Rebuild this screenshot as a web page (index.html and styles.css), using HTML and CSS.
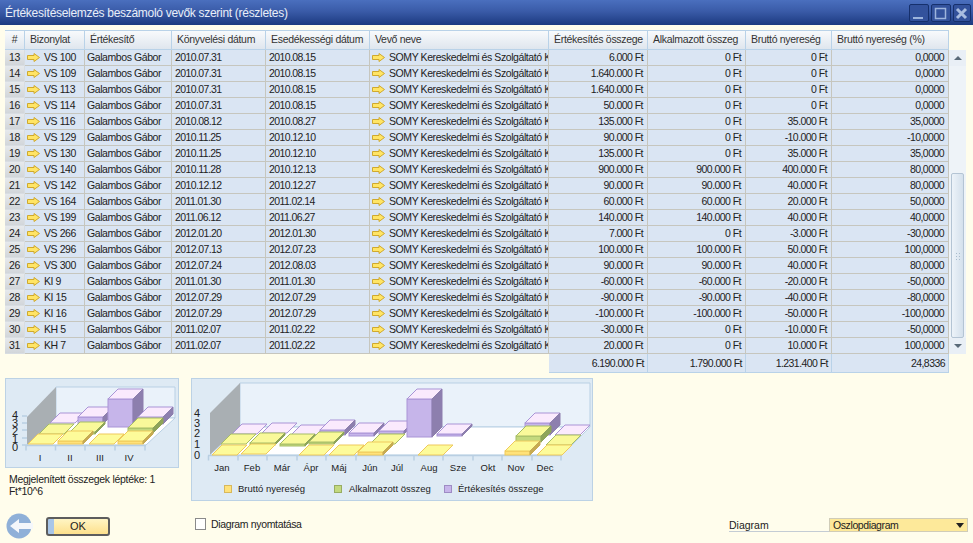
FILE: index.html
```html
<!DOCTYPE html>
<html lang="hu">

<head>
    <meta charset="utf-8">
    <title>Értékesítéselemzés</title>
    <link rel="stylesheet" href="styles.css">
</head>

<body>
    <svg class="defs" width="0" height="0">
        <defs>
            <symbol id="arrow" viewBox="0 0 13 9">
                <polygon points="0.5,2.5 7,2.5 7,0.5 12.5,4.5 7,8.5 7,6.5 0.5,6.5" fill="#ffe566" stroke="#cfa92f" />
            </symbol>
            <polygon id="top" points="0,0 25,0 35,-10 10,-10" />
        </defs>
    </svg>

    <div class="titlebar">
        <span class="title">Értékesítéselemzés beszámoló vevők szerint (részletes)</span>
        <div class="winbtns">
            <span class="winbtn"><svg width="18" height="18"><rect x="3" y="12" width="10" height="2" fill="#9db4dc" /></svg></span>
            <span class="winbtn"><svg width="18" height="18"><rect x="3.5" y="3.5" width="10" height="10" fill="none" stroke="#9db4dc" stroke-width="1.5" /></svg></span>
            <span class="winbtn"><svg width="16" height="18"><path d="M3 4l9 9M12 4l-9 9" stroke="#a9bde0" stroke-width="3" /></svg></span>
        </div>
    </div>

    <div class="gridwrap">
        <table class="grid">
            <colgroup>
                <col class="c1"><col class="c2"><col class="c3"><col class="c4"><col class="c5">
                <col class="c6"><col class="c7"><col class="c8"><col class="c9"><col class="c10">
            </colgroup>
            <thead>
                <tr>
                    <th class="center">#</th>
                    <th>Bizonylat</th>
                    <th>Értékesítő</th>
                    <th>Könyvelési dátum</th>
                    <th>Esedékességi dátum</th>
                    <th>Vevő neve</th>
                    <th>Értékesítés összege</th>
                    <th>Alkalmazott összeg</th>
                    <th>Bruttó nyereség</th>
                    <th>Bruttó nyereség (%)</th>
                </tr>
            </thead>
            <tbody>
                <tr><td class="num">13</td><td class="doc"><svg><use href="#arrow" /></svg>VS 100</td><td>Galambos Gábor</td><td class="d">2010.07.31</td><td class="d">2010.08.15</td><td class="doc"><svg><use href="#arrow" /></svg>SOMY Kereskedelmi és Szolgáltató Kft.</td><td class="r">6.000 Ft</td><td class="r">0 Ft</td><td class="r">0 Ft</td><td class="r">0,0000</td></tr>
                <tr><td class="num">14</td><td class="doc"><svg><use href="#arrow" /></svg>VS 109</td><td>Galambos Gábor</td><td class="d">2010.07.31</td><td class="d">2010.08.15</td><td class="doc"><svg><use href="#arrow" /></svg>SOMY Kereskedelmi és Szolgáltató Kft.</td><td class="r">1.640.000 Ft</td><td class="r">0 Ft</td><td class="r">0 Ft</td><td class="r">0,0000</td></tr>
                <tr><td class="num">15</td><td class="doc"><svg><use href="#arrow" /></svg>VS 113</td><td>Galambos Gábor</td><td class="d">2010.07.31</td><td class="d">2010.08.15</td><td class="doc"><svg><use href="#arrow" /></svg>SOMY Kereskedelmi és Szolgáltató Kft.</td><td class="r">1.640.000 Ft</td><td class="r">0 Ft</td><td class="r">0 Ft</td><td class="r">0,0000</td></tr>
                <tr><td class="num">16</td><td class="doc"><svg><use href="#arrow" /></svg>VS 114</td><td>Galambos Gábor</td><td class="d">2010.07.31</td><td class="d">2010.08.15</td><td class="doc"><svg><use href="#arrow" /></svg>SOMY Kereskedelmi és Szolgáltató Kft.</td><td class="r">50.000 Ft</td><td class="r">0 Ft</td><td class="r">0 Ft</td><td class="r">0,0000</td></tr>
                <tr><td class="num">17</td><td class="doc"><svg><use href="#arrow" /></svg>VS 116</td><td>Galambos Gábor</td><td class="d">2010.08.12</td><td class="d">2010.08.27</td><td class="doc"><svg><use href="#arrow" /></svg>SOMY Kereskedelmi és Szolgáltató Kft.</td><td class="r">135.000 Ft</td><td class="r">0 Ft</td><td class="r">35.000 Ft</td><td class="r">35,0000</td></tr>
                <tr><td class="num">18</td><td class="doc"><svg><use href="#arrow" /></svg>VS 129</td><td>Galambos Gábor</td><td class="d">2010.11.25</td><td class="d">2010.12.10</td><td class="doc"><svg><use href="#arrow" /></svg>SOMY Kereskedelmi és Szolgáltató Kft.</td><td class="r">90.000 Ft</td><td class="r">0 Ft</td><td class="r">-10.000 Ft</td><td class="r">-10,0000</td></tr>
                <tr><td class="num">19</td><td class="doc"><svg><use href="#arrow" /></svg>VS 130</td><td>Galambos Gábor</td><td class="d">2010.11.25</td><td class="d">2010.12.10</td><td class="doc"><svg><use href="#arrow" /></svg>SOMY Kereskedelmi és Szolgáltató Kft.</td><td class="r">135.000 Ft</td><td class="r">0 Ft</td><td class="r">35.000 Ft</td><td class="r">35,0000</td></tr>
                <tr><td class="num">20</td><td class="doc"><svg><use href="#arrow" /></svg>VS 140</td><td>Galambos Gábor</td><td class="d">2010.11.28</td><td class="d">2010.12.13</td><td class="doc"><svg><use href="#arrow" /></svg>SOMY Kereskedelmi és Szolgáltató Kft.</td><td class="r">900.000 Ft</td><td class="r">900.000 Ft</td><td class="r">400.000 Ft</td><td class="r">80,0000</td></tr>
                <tr><td class="num">21</td><td class="doc"><svg><use href="#arrow" /></svg>VS 142</td><td>Galambos Gábor</td><td class="d">2010.12.12</td><td class="d">2010.12.27</td><td class="doc"><svg><use href="#arrow" /></svg>SOMY Kereskedelmi és Szolgáltató Kft.</td><td class="r">90.000 Ft</td><td class="r">90.000 Ft</td><td class="r">40.000 Ft</td><td class="r">80,0000</td></tr>
                <tr><td class="num">22</td><td class="doc"><svg><use href="#arrow" /></svg>VS 164</td><td>Galambos Gábor</td><td class="d">2011.01.30</td><td class="d">2011.02.14</td><td class="doc"><svg><use href="#arrow" /></svg>SOMY Kereskedelmi és Szolgáltató Kft.</td><td class="r">60.000 Ft</td><td class="r">60.000 Ft</td><td class="r">20.000 Ft</td><td class="r">50,0000</td></tr>
                <tr><td class="num">23</td><td class="doc"><svg><use href="#arrow" /></svg>VS 199</td><td>Galambos Gábor</td><td class="d">2011.06.12</td><td class="d">2011.06.27</td><td class="doc"><svg><use href="#arrow" /></svg>SOMY Kereskedelmi és Szolgáltató Kft.</td><td class="r">140.000 Ft</td><td class="r">140.000 Ft</td><td class="r">40.000 Ft</td><td class="r">40,0000</td></tr>
                <tr><td class="num">24</td><td class="doc"><svg><use href="#arrow" /></svg>VS 266</td><td>Galambos Gábor</td><td class="d">2012.01.20</td><td class="d">2012.01.30</td><td class="doc"><svg><use href="#arrow" /></svg>SOMY Kereskedelmi és Szolgáltató Kft.</td><td class="r">7.000 Ft</td><td class="r">0 Ft</td><td class="r">-3.000 Ft</td><td class="r">-30,0000</td></tr>
                <tr><td class="num">25</td><td class="doc"><svg><use href="#arrow" /></svg>VS 296</td><td>Galambos Gábor</td><td class="d">2012.07.13</td><td class="d">2012.07.23</td><td class="doc"><svg><use href="#arrow" /></svg>SOMY Kereskedelmi és Szolgáltató Kft.</td><td class="r">100.000 Ft</td><td class="r">100.000 Ft</td><td class="r">50.000 Ft</td><td class="r">100,0000</td></tr>
                <tr><td class="num">26</td><td class="doc"><svg><use href="#arrow" /></svg>VS 300</td><td>Galambos Gábor</td><td class="d">2012.07.24</td><td class="d">2012.08.03</td><td class="doc"><svg><use href="#arrow" /></svg>SOMY Kereskedelmi és Szolgáltató Kft.</td><td class="r">90.000 Ft</td><td class="r">90.000 Ft</td><td class="r">40.000 Ft</td><td class="r">80,0000</td></tr>
                <tr><td class="num">27</td><td class="doc"><svg><use href="#arrow" /></svg>KI 9</td><td>Galambos Gábor</td><td class="d">2011.01.30</td><td class="d">2011.01.30</td><td class="doc"><svg><use href="#arrow" /></svg>SOMY Kereskedelmi és Szolgáltató Kft.</td><td class="r">-60.000 Ft</td><td class="r">-60.000 Ft</td><td class="r">-20.000 Ft</td><td class="r">-50,0000</td></tr>
                <tr><td class="num">28</td><td class="doc"><svg><use href="#arrow" /></svg>KI 15</td><td>Galambos Gábor</td><td class="d">2012.07.29</td><td class="d">2012.07.29</td><td class="doc"><svg><use href="#arrow" /></svg>SOMY Kereskedelmi és Szolgáltató Kft.</td><td class="r">-90.000 Ft</td><td class="r">-90.000 Ft</td><td class="r">-40.000 Ft</td><td class="r">-80,0000</td></tr>
                <tr><td class="num">29</td><td class="doc"><svg><use href="#arrow" /></svg>KI 16</td><td>Galambos Gábor</td><td class="d">2012.07.29</td><td class="d">2012.07.29</td><td class="doc"><svg><use href="#arrow" /></svg>SOMY Kereskedelmi és Szolgáltató Kft.</td><td class="r">-100.000 Ft</td><td class="r">-100.000 Ft</td><td class="r">-50.000 Ft</td><td class="r">-100,0000</td></tr>
                <tr><td class="num">30</td><td class="doc"><svg><use href="#arrow" /></svg>KH 5</td><td>Galambos Gábor</td><td class="d">2011.02.07</td><td class="d">2011.02.22</td><td class="doc"><svg><use href="#arrow" /></svg>SOMY Kereskedelmi és Szolgáltató Kft.</td><td class="r">-30.000 Ft</td><td class="r">0 Ft</td><td class="r">-10.000 Ft</td><td class="r">-50,0000</td></tr>
                <tr><td class="num">31</td><td class="doc"><svg><use href="#arrow" /></svg>KH 7</td><td>Galambos Gábor</td><td class="d">2011.02.07</td><td class="d">2011.02.22</td><td class="doc"><svg><use href="#arrow" /></svg>SOMY Kereskedelmi és Szolgáltató Kft.</td><td class="r">20.000 Ft</td><td class="r">0 Ft</td><td class="r">10.000 Ft</td><td class="r">100,0000</td></tr>
            </tbody>
            <tfoot>
                <tr>
                    <td colspan="6" class="blank"></td>
                    <td class="r">6.190.000 Ft</td>
                    <td class="r">1.790.000 Ft</td>
                    <td class="r">1.231.400 Ft</td>
                    <td class="r">24,8336</td>
                </tr>
            </tfoot>
        </table>

        <div class="scrollbar">
            <div class="scrollbtn"><span class="tri up"></span></div>
            <div class="scrolltrack">
                <div class="thumb"><span class="grip"></span></div>
            </div>
            <div class="scrollbtn"><span class="tri down"></span></div>
        </div>
    </div>

    <div class="charts">
        <div class="leftcol">
            <div class="panel small">
                <svg class="chart" width="174" height="90" viewBox="5 378 174 90">
                    <polygon class="wall" points="56,387 175,387 175,418 56,418" />
                    <polygon class="side-wall" points="27,417 56,387 56,418 27,445" />
                    <polygon class="floor" points="27,445 56,418 175,418 146,445" />
                    <path class="axis" d="M26 445.5H146M26 445.5v5M55.5 445.5v5M85 445.5v5M115 445.5v5M145 445.5v5M22 416H27M22 423H27M22 430H27M22 438H27M22 445H27" />

                    <g class="purple">
                        <use href="#top" x="50" y="423" />
                        <g transform="translate(78 417)"><rect width="25" height="7" /><use href="#top" /><polygon class="side" points="25,0 35,-10 35,-3 25,7" /></g>
                        <g transform="translate(108 399)"><rect width="25" height="28" /><use href="#top" /><polygon class="side" points="25,0 35,-10 35,18 25,28" /></g>
                        <g transform="translate(138 417)"><rect width="25" height="7" /><use href="#top" /><polygon class="side" points="25,0 35,-10 35,-3 25,7" /></g>
                    </g>
                    <g class="green">
                        <use href="#top" x="39" y="434" />
                        <g transform="translate(70 432)"><rect width="25" height="2" /><use href="#top" /><polygon class="side" points="25,0 35,-10 35,-8 25,2" /></g>
                        <g transform="translate(128 428)"><rect width="25" height="5" /><use href="#top" /><polygon class="side" points="25,0 35,-10 35,-5 25,5" /></g>
                    </g>
                    <g class="yellow">
                        <use href="#top" x="28" y="444" />
                        <g transform="translate(58 441)"><rect width="25" height="3" /><use href="#top" /><polygon class="side" points="25,0 35,-10 35,-7 25,3" /></g>
                        <use href="#top" x="89" y="444" />
                        <g transform="translate(118 441)"><rect width="25" height="3" /><use href="#top" /><polygon class="side" points="25,0 35,-10 35,-7 25,3" /></g>
                    </g>

                    <text class="dig" x="12" y="419">4</text>
                    <text class="dig" x="12" y="427">3</text>
                    <text class="dig" x="12" y="435">2</text>
                    <text class="dig" x="12" y="443">1</text>
                    <text class="dig" x="12" y="451">0</text>
                    <text class="mid" x="40" y="461">I</text>
                    <text class="mid" x="70" y="461">II</text>
                    <text class="mid" x="100" y="461">III</text>
                    <text class="mid" x="129" y="461">IV</text>
                </svg>
            </div>
            <p class="scale">Megjelenített összegek léptéke: 1<br>Ft*10^6</p>
        </div>

        <div class="panel big">
            <svg class="chart" width="402" height="123" viewBox="191 378 402 123">
                <polygon class="wall" points="240,383 590,383 590,427 240,427" />
                <polygon class="side-wall" points="210,413 240,383 240,427 210,455" />
                <polygon class="floor" points="210,455 240,427 590,427 562,455" />
                <path class="axis" d="M208 455.5H562M208.5 455.5v5M238 455.5v5M267 455.5v5M297 455.5v5M326 455.5v5M356 455.5v5M385 455.5v5M414 455.5v5M443 455.5v5M473 455.5v5M502 455.5v5M532 455.5v5M561 455.5v5" />

                <g class="purple">
                    <use href="#top" x="232" y="434" />
                    <use href="#top" x="262" y="433" />
                    <use href="#top" x="291" y="435" />
                    <g transform="translate(320 430)"><rect width="25" height="5" /><use href="#top" /><polygon class="side" points="25,0 35,-10 35,-5 25,5" /></g>
                    <g transform="translate(349 433)"><rect width="25" height="3" /><use href="#top" /><polygon class="side" points="25,0 35,-10 35,-7 25,3" /></g>
                    <g transform="translate(379 431)"><rect width="25" height="3" /><use href="#top" /><polygon class="side" points="25,0 35,-10 35,-7 25,3" /></g>
                    <g transform="translate(407 399)"><rect width="25" height="38" /><use href="#top" /><polygon class="side" points="25,0 35,-10 35,28 25,38" /></g>
                    <g transform="translate(437 434)"><rect width="25" height="2" /><use href="#top" /><polygon class="side" points="25,0 35,-10 35,-8 25,2" /></g>
                    <g transform="translate(525 423)"><rect width="25" height="12" /><use href="#top" /><polygon class="side" points="25,0 35,-10 35,2 25,12" /></g>
                    <use href="#top" x="555" y="435" />
                </g>
                <g class="green">
                    <use href="#top" x="221" y="444" />
                    <g transform="translate(250 443)"><rect width="25" height="2" /><use href="#top" /><polygon class="side" points="25,0 35,-10 35,-8 25,2" /></g>
                    <g transform="translate(280 444)"><rect width="25" height="2" /><use href="#top" /><polygon class="side" points="25,0 35,-10 35,-8 25,2" /></g>
                    <g transform="translate(309 442)"><rect width="25" height="2" /><use href="#top" /><polygon class="side" points="25,0 35,-10 35,-8 25,2" /></g>
                    <use href="#top" x="370" y="444" />
                    <g transform="translate(516 436)"><rect width="25" height="6" /><use href="#top" /><polygon class="side" points="25,0 35,-10 35,-4 25,6" /></g>
                    <use href="#top" x="546" y="445" />
                </g>
                <g class="yellow">
                    <use href="#top" x="212" y="455" />
                    <use href="#top" x="241" y="454" />
                    <use href="#top" x="299" y="455" />
                    <use href="#top" x="329" y="455" />
                    <g transform="translate(358 452)"><rect width="25" height="3" /><use href="#top" /><polygon class="side" points="25,0 35,-10 35,-7 25,3" /></g>
                    <use href="#top" x="418" y="455" />
                    <g transform="translate(505 451)"><rect width="25" height="4" /><use href="#top" /><polygon class="side" points="25,0 35,-10 35,-6 25,4" /></g>
                    <use href="#top" x="537" y="455" />
                </g>

                <text class="mid dig" x="197" y="417">4</text>
                <text class="mid dig" x="197" y="427">3</text>
                <text class="mid dig" x="197" y="437">2</text>
                <text class="mid dig" x="197" y="448">1</text>
                <text class="mid dig" x="197" y="459">0</text>

                <text class="mid" x="222" y="471">Jan</text>
                <text class="mid" x="252" y="471">Feb</text>
                <text class="mid" x="282" y="471">Már</text>
                <text class="mid" x="311" y="471">Ápr</text>
                <text class="mid" x="339" y="471">Máj</text>
                <text class="mid" x="370" y="471">Jún</text>
                <text class="mid" x="397" y="471">Júl</text>
                <text class="mid" x="429" y="471">Aug</text>
                <text class="mid" x="458" y="471">Sze</text>
                <text class="mid" x="488" y="471">Okt</text>
                <text class="mid" x="516" y="471">Nov</text>
                <text class="mid" x="545" y="471">Dec</text>

                <rect class="key k1" x="224.5" y="485.5" width="7" height="7" />
                <text x="238" y="492">Bruttó nyereség</text>
                <rect class="key k2" x="334.5" y="485.5" width="7" height="7" />
                <text x="349" y="492">Alkalmazott összeg</text>
                <rect class="key k3" x="444.5" y="485.5" width="7" height="7" />
                <text x="458" y="492">Értékesítés összege</text>
            </svg>
        </div>
    </div>

    <div class="footer">
        <svg class="back" width="28" height="26" viewBox="0 0 28 26">
            <circle cx="13" cy="13" r="12.5" fill="#8fb0d8" />
            <polygon points="4,13 13,6 13,10 27,10 27,16 13,16 13,20" fill="#f4f7fb" />
        </svg>
        <button class="okbtn">OK</button>
        <label class="print"><span class="check"></span>Diagram nyomtatása</label>
        <div class="diagram">
            <span class="dlabel">Diagram</span>
            <span class="select">Oszlopdiagram<span class="tri dark"></span></span>
        </div>
    </div>
</body>

</html>
```

FILE: styles.css
```css
* {
    box-sizing: border-box;
}

body {
    margin: 0;
    background-color: #fffdec;
    color: #222;
    font-family: "Liberation Sans", Arial, sans-serif;
    font-size: 10.5px;
    overflow: hidden;
}

.defs {
    position: absolute;
}

.titlebar {
    display: flex;
    justify-content: space-between;
    align-items: center;
    height: 25px;
    padding: 0 2px 0 5px;
    background: linear-gradient(#4a6fbe, #3a5ba8 45%, #1c3a80);
}

.title {
    color: #e8eef8;
    font-size: 12px;
    letter-spacing: -0.3px;
}

.winbtns {
    display: flex;
    gap: 2px;
}

.winbtn {
    display: block;
    height: 18px;
    border: 1px solid #16306c;
    border-radius: 2px;
    background-color: #33529c;
    line-height: 0;
}

.gridwrap {
    display: flex;
    padding: 5px 0 0 5px;
}

.grid {
    width: 944px;
    table-layout: fixed;
    border-collapse: separate;
    border-spacing: 0;
}

.c1 { width: 20px; }
.c2 { width: 60px; }
.c3 { width: 87px; }
.c4 { width: 94px; }
.c5 { width: 104px; }
.c6 { width: 179px; }
.c7 { width: 99px; }
.c8 { width: 98px; }
.c9 { width: 86px; }
.c10 { width: 117px; }

.grid th {
    height: 20px;
    padding: 0 0 3px 5px;
    border-top: 1px solid #b9d2e8;
    border-right: 1px solid #b9d2e8;
    border-bottom: 1px solid #b9d2e8;
    background: linear-gradient(#f8fafc, #dfe6ee);
    color: #333;
    font-weight: normal;
    letter-spacing: -0.3px;
    text-align: left;
    white-space: nowrap;
    overflow: hidden;
}

.grid th.center {
    padding-left: 0;
    text-align: center;
}

.grid td {
    height: 16px;
    padding: 0 3px 1px 2px;
    border-right: 1px solid #c6c6be;
    border-bottom: 1px solid #c6c6be;
    background-color: #dae5f3;
    letter-spacing: -0.42px;
    line-height: 12px;
    white-space: nowrap;
    overflow: hidden;
}

.grid td.num {
    padding: 0 0 1px;
    border-color: #d8dde2;
    background: linear-gradient(#e6e9ec, #d2d6da);
    text-align: center;
}

.grid td.doc {
    padding-left: 2px;
}

.grid td.doc svg {
    width: 13px;
    height: 9px;
    margin-right: 4px;
    vertical-align: -1px;
}

.grid td.d {
    padding-left: 3px;
    letter-spacing: -0.6px;
}

.grid td.r {
    padding-right: 4px;
    letter-spacing: -0.55px;
    text-align: right;
}

.grid tfoot td {
    height: 19px;
    border-color: #b9d2e8;
}

.grid tfoot td.r {
    padding-right: 3px;
}

.grid tfoot td.blank {
    border: 0;
    background: none;
}

.scrollbar {
    display: flex;
    flex-direction: column;
    width: 17px;
    height: 304px;
    margin-top: 20px;
    background-color: #eef3f8;
}

.scrollbtn {
    display: flex;
    justify-content: center;
    align-items: center;
    height: 16px;
    background-color: #e9eff6;
}

.scrolltrack {
    flex: 1;
    padding: 107px 2px 0;
}

.thumb {
    display: flex;
    justify-content: center;
    align-items: center;
    height: 165px;
    border: 1px solid #b4c4d4;
    border-radius: 2px;
    background: linear-gradient(90deg, #edf3f9, #d4e0ec);
}

.grip {
    width: 6px;
    height: 8px;
    background-image: radial-gradient(circle, #a9bccd 1px, transparent 1px);
    background-size: 3px 3px;
}

.tri {
    display: block;
    width: 0;
    height: 0;
    border-left: 4px solid transparent;
    border-right: 4px solid transparent;
}

.tri.up {
    border-bottom: 4px solid #5a6a78;
}

.tri.down {
    border-top: 4px solid #5a6a78;
}

.tri.dark {
    border-top: 5px solid #222;
}

.charts {
    display: flex;
    gap: 12px;
    padding: 5px 0 0 5px;
}

.leftcol {
    width: 174px;
}

.panel {
    border: 1px solid #bcd2e5;
    background-color: #deeaf4;
    line-height: 0;
}

.panel.small {
    height: 90px;
}

.panel.big {
    width: 402px;
    height: 123px;
}

.chart {
    display: block;
    margin: -1px;
}

.chart text {
    fill: #222;
    font-size: 9.5px;
}

.chart text.mid {
    text-anchor: middle;
}

.chart text.dig {
    font-size: 11px;
}

.wall {
    fill: #eaf2fa;
    stroke: #b9d0e4;
}

.side-wall {
    fill: #a9afb3;
}

.floor {
    fill: #fff;
    stroke: #b9d0e4;
}

.axis {
    fill: none;
    stroke: #b9cfe2;
    stroke-width: 1.5;
}

.purple {
    fill: #c6b5ea;
    stroke: #a994d6;
}

.purple use {
    fill: #faeafd;
}

.purple .side {
    fill: #8d7fae;
    stroke: #8d7fae;
}

.green {
    fill: #c3d97e;
    stroke: #a6bd66;
}

.green use {
    fill: #f9f99a;
}

.green .side {
    fill: #8ea45a;
    stroke: #8ea45a;
}

.yellow {
    fill: #ffe27a;
    stroke: #efc95c;
}

.yellow use {
    fill: #fdfb9a;
}

.yellow .side {
    fill: #c7ab52;
    stroke: #c7ab52;
}

.key {
    stroke: #d8b85c;
}

.k1 { fill: #ffe27a; }
.k2 { fill: #c3d97e; stroke: #98ad62; }
.k3 { fill: #c7b5ea; stroke: #9e8cc4; }

.scale {
    margin: 5px 0 0 4px;
    letter-spacing: -0.3px;
    line-height: 12px;
}

.footer {
    display: flex;
    align-items: center;
    height: 30px;
    padding-left: 6px;
    margin-top: 10px;
}

.back {
    margin-right: 12px;
}

.okbtn {
    width: 64px;
    height: 19px;
    padding: 0;
    margin-right: 85px;
    border: 2px solid #5d5d5d;
    border-radius: 3px;
    background: linear-gradient(90deg, #a9c6e8 6px, transparent 6px), linear-gradient(#fff5c4, #fde08c);
    color: #222;
    font-family: inherit;
    font-size: 11px;
}

.print {
    display: flex;
    align-items: center;
    margin-bottom: 4px;
    letter-spacing: -0.35px;
}

.check {
    width: 11px;
    height: 12px;
    margin-right: 5px;
    border: 1px solid #8a8a8a;
    background-color: #fff;
}

.diagram {
    display: flex;
    align-items: center;
    width: 239px;
    margin-left: auto;
    margin-right: 5px;
    margin-bottom: 2px;
}

.dlabel {
    width: 100px;
    height: 13px;
    border-bottom: 1px solid #c4ccd4;
    line-height: 12px;
}

.select {
    display: flex;
    justify-content: space-between;
    align-items: center;
    width: 139px;
    height: 14px;
    padding: 0 3px;
    border: 1px solid #d0ccb8;
    background-color: #fde99a;
    letter-spacing: -0.4px;
}
```
